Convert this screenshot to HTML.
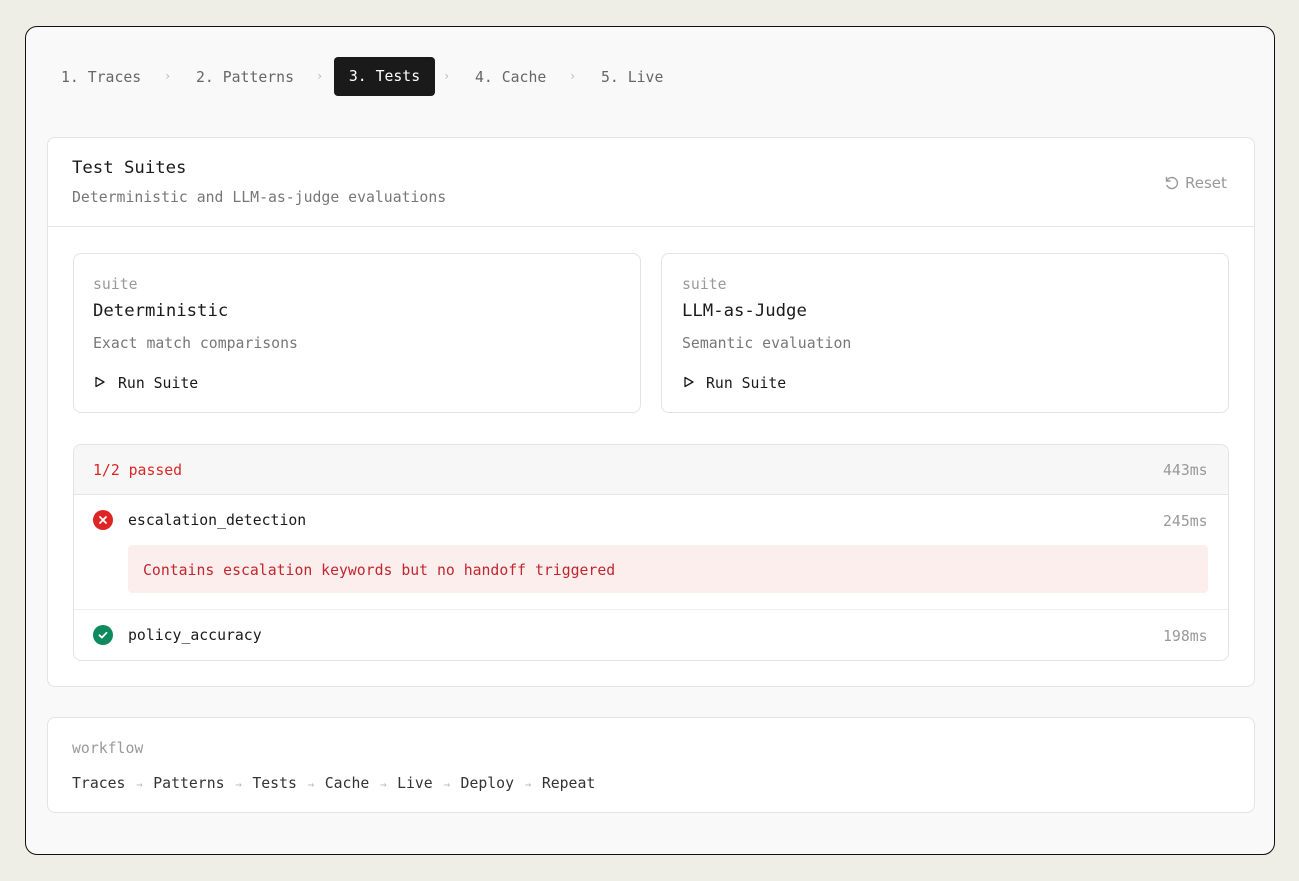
<!DOCTYPE html>
<html><head><meta charset="utf-8"><style>
*{box-sizing:border-box;margin:0;padding:0}
body{width:1299px;height:881px;background:#eeede6;font-family:"DejaVu Sans Mono","Liberation Mono",monospace;font-size:14.8px;color:#1a1a1a;position:relative;overflow:hidden}
.abs{position:absolute}
.frame{left:25px;top:26px;width:1250px;height:829px;border:1.8px solid #111;border-radius:12px;background:#f9f9f9}
.tab{top:58px;height:39px;line-height:39px;color:#666;white-space:nowrap}
.chev{top:58px;line-height:37px;color:#bbb;font-size:12px}
.panel{background:#fff;border:1px solid #e3e3e3;border-radius:8px}
.muted{color:#777}
.light{color:#999}
.ar{color:#bbb;display:inline-block;width:10px;text-align:center;font-size:11px}
</style></head><body>
<div class="abs frame"></div>
<div class="abs tab" style="left:61px">1. Traces</div>
<div class="abs chev" style="left:164px">›</div>
<div class="abs tab" style="left:196px">2. Patterns</div>
<div class="abs chev" style="left:316px">›</div>
<div class="abs tab" style="left:334px;top:57px;width:101px;background:#1a1a1a;color:#fff;border-radius:4px;text-align:center">3. Tests</div>
<div class="abs chev" style="left:443px">›</div>
<div class="abs tab" style="left:475px">4. Cache</div>
<div class="abs chev" style="left:569px">›</div>
<div class="abs tab" style="left:601px">5. Live</div>

<div class="abs panel" style="left:47px;top:137px;width:1208px;height:550px"></div>
<div class="abs" style="left:72px;top:158px;font-size:17.3px">Test Suites</div>
<div class="abs muted" style="left:72px;top:189px">Deterministic and LLM-as-judge evaluations</div>
<div class="abs light" style="left:1164px;top:174px;font-family:'DejaVu Sans','Liberation Sans',sans-serif;font-size:15px;display:flex;align-items:center;gap:5px">
<svg width="16" height="16" viewBox="0 0 16 16" fill="none" stroke="#999" stroke-width="1.4" stroke-linecap="round"><path d="M2.5 2.5v3.5h3.5"/><path d="M2.8 6A5.5 5.5 0 1 1 3 10.5"/></svg>Reset</div>
<div class="abs" style="left:48px;top:226px;width:1206px;height:1px;background:#e5e5e5"></div>

<div class="abs panel" style="left:73px;top:253px;width:568px;height:160px"></div>
<div class="abs light" style="left:93px;top:276px">suite</div>
<div class="abs" style="left:93px;top:301px;font-size:17.3px">Deterministic</div>
<div class="abs muted" style="left:93px;top:335px">Exact match comparisons</div>
<svg class="abs" style="left:94px;top:376px" width="12" height="12" viewBox="0 0 12 12"><path d="M2 1.5l8 4.5-8 4.5z" fill="none" stroke="#1a1a1a" stroke-width="1.3" stroke-linejoin="round"/></svg>
<div class="abs" style="left:118px;top:375px">Run Suite</div>

<div class="abs panel" style="left:661px;top:253px;width:568px;height:160px"></div>
<div class="abs light" style="left:682px;top:276px">suite</div>
<div class="abs" style="left:682px;top:301px;font-size:17.3px">LLM-as-Judge</div>
<div class="abs muted" style="left:682px;top:335px">Semantic evaluation</div>
<svg class="abs" style="left:683px;top:376px" width="12" height="12" viewBox="0 0 12 12"><path d="M2 1.5l8 4.5-8 4.5z" fill="none" stroke="#1a1a1a" stroke-width="1.3" stroke-linejoin="round"/></svg>
<div class="abs" style="left:706px;top:375px">Run Suite</div>

<div class="abs panel" style="left:73px;top:444px;width:1156px;height:217px;overflow:hidden">
<div style="height:50px;background:#f7f7f7;border-bottom:1px solid #e5e5e5"></div></div>
<div class="abs" style="left:93px;top:462px;color:#dc2626">1/2 passed</div>
<div class="abs light" style="left:1163px;top:462px">443ms</div>
<svg class="abs" style="left:93px;top:510px" width="20" height="20" viewBox="0 0 20 20"><circle cx="10" cy="10" r="10" fill="#dc2626"/><path d="M7 7l6 6M13 7l-6 6" stroke="#fff" stroke-width="1.8" stroke-linecap="round"/></svg>
<div class="abs" style="left:128px;top:512px">escalation_detection</div>
<div class="abs light" style="left:1163px;top:513px">245ms</div>
<div class="abs" style="left:128px;top:545px;width:1080px;height:48px;background:#fdeeee;border-radius:4px"></div>
<div class="abs" style="left:143px;top:562px;color:#c0262d">Contains escalation keywords but no handoff triggered</div>
<div class="abs" style="left:74px;top:609px;width:1154px;height:1px;background:#eee"></div>
<svg class="abs" style="left:93px;top:625px" width="20" height="20" viewBox="0 0 20 20"><circle cx="10" cy="10" r="10" fill="#0f8a5f"/><path d="M6.5 10.2l2.4 2.4 4.6-4.8" stroke="#fff" stroke-width="1.8" fill="none" stroke-linecap="round" stroke-linejoin="round"/></svg>
<div class="abs" style="left:128px;top:627px">policy_accuracy</div>
<div class="abs light" style="left:1163px;top:628px">198ms</div>

<div class="abs panel" style="left:47px;top:717px;width:1208px;height:96px"></div>
<div class="abs light" style="left:72px;top:740px">workflow</div>
<div class="abs" style="left:72px;top:775px;color:#333;white-space:nowrap">Traces <span class="ar">→</span> Patterns <span class="ar">→</span> Tests <span class="ar">→</span> Cache <span class="ar">→</span> Live <span class="ar">→</span> Deploy <span class="ar">→</span> Repeat</div>
</body></html>
